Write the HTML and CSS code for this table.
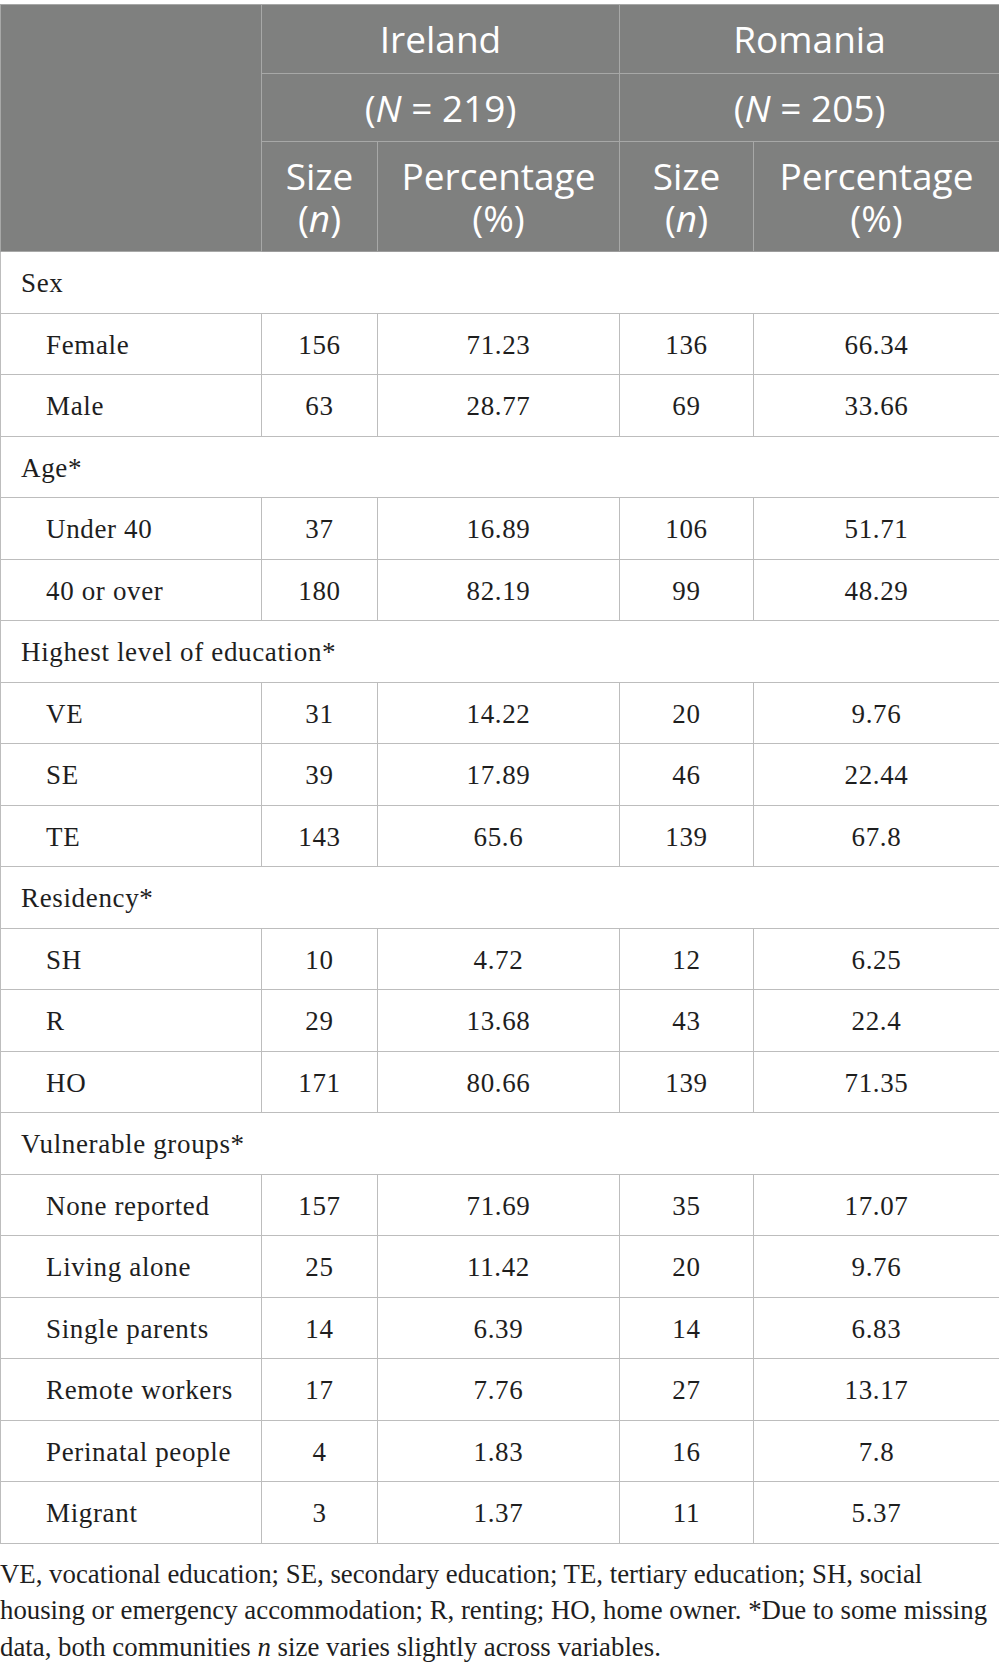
FILE: index.html
```html
<!DOCTYPE html>
<html lang="en">
<head>
  <meta charset="UTF-8" />
  <title>Sample characteristics - Ireland and Romania</title>
  <link rel="stylesheet" href="styles.css">
</head>
<body>

<table class="stats">
  <colgroup>
    <col class="c-label">
    <col class="c-size">
    <col class="c-pct">
    <col class="c-size2">
    <col class="c-pct2">
  </colgroup>
  <thead>
    <tr>
      <th rowspan="3"></th>
      <th colspan="2">Ireland</th>
      <th colspan="2">Romania</th>
    </tr>
    <tr>
      <th colspan="2">(<i>N</i> = 219)</th>
      <th colspan="2">(<i>N</i> = 205)</th>
    </tr>
    <tr>
      <th>Size<br>(<i>n</i>)</th>
      <th>Percentage<br>(%)</th>
      <th>Size<br>(<i>n</i>)</th>
      <th>Percentage<br>(%)</th>
    </tr>
  </thead>
  <tbody>
    <tr><td class="group" colspan="5">Sex</td></tr>
    <tr><td class="item">Female</td><td>156</td><td>71.23</td><td>136</td><td>66.34</td></tr>
    <tr><td class="item">Male</td><td>63</td><td>28.77</td><td>69</td><td>33.66</td></tr>

    <tr><td class="group" colspan="5">Age*</td></tr>
    <tr><td class="item">Under 40</td><td>37</td><td>16.89</td><td>106</td><td>51.71</td></tr>
    <tr><td class="item">40 or over</td><td>180</td><td>82.19</td><td>99</td><td>48.29</td></tr>

    <tr><td class="group" colspan="5">Highest level of education*</td></tr>
    <tr><td class="item">VE</td><td>31</td><td>14.22</td><td>20</td><td>9.76</td></tr>
    <tr><td class="item">SE</td><td>39</td><td>17.89</td><td>46</td><td>22.44</td></tr>
    <tr><td class="item">TE</td><td>143</td><td>65.6</td><td>139</td><td>67.8</td></tr>

    <tr><td class="group" colspan="5">Residency*</td></tr>
    <tr><td class="item">SH</td><td>10</td><td>4.72</td><td>12</td><td>6.25</td></tr>
    <tr><td class="item">R</td><td>29</td><td>13.68</td><td>43</td><td>22.4</td></tr>
    <tr><td class="item">HO</td><td>171</td><td>80.66</td><td>139</td><td>71.35</td></tr>

    <tr><td class="group" colspan="5">Vulnerable groups*</td></tr>
    <tr><td class="item">None reported</td><td>157</td><td>71.69</td><td>35</td><td>17.07</td></tr>
    <tr><td class="item">Living alone</td><td>25</td><td>11.42</td><td>20</td><td>9.76</td></tr>
    <tr><td class="item">Single parents</td><td>14</td><td>6.39</td><td>14</td><td>6.83</td></tr>
    <tr><td class="item">Remote workers</td><td>17</td><td>7.76</td><td>27</td><td>13.17</td></tr>
    <tr><td class="item">Perinatal people</td><td>4</td><td>1.83</td><td>16</td><td>7.8</td></tr>
    <tr><td class="item">Migrant</td><td>3</td><td>1.37</td><td>11</td><td>5.37</td></tr>
  </tbody>
</table>

<p class="notes">VE, vocational education; SE, secondary education; TE, tertiary education; SH, social housing or emergency accommodation; R, renting; HO, home owner. *Due to some missing data, both communities <i>n</i> size varies slightly across variables.</p>

</body>
</html>
```

FILE: styles.css
```css
/* Demographics table, journal style */
* {
  margin: 0;
  padding: 0;
  box-sizing: border-box;
}
body {
  background: #fff;
  color: #1e1e1e;
  font-family: "Liberation Serif", "Times New Roman", serif;
  padding-top: 4px;
  width: 999px;
}
.stats {
  width: 999px;
  border-collapse: collapse;
  table-layout: fixed;
}
.c-label { width: 261px; }
.c-size { width: 116px; }
.c-pct { width: 242px; }
.c-size2 { width: 134px; }
.c-pct2 { width: 246px; }

thead th {
  background: #7f807f;
  color: #fff;
  font-family: "Open Sans", "Liberation Sans", sans-serif;
  font-weight: 400;
  font-size: 37px;
  line-height: 41.5px;
  padding: 13px 4px;
  text-align: center;
  border: 1px solid #a7a8a7;
}
thead tr:last-child th {
  border-bottom-color: #9c9c9c;
}
tbody td {
  font-size: 27px;
  letter-spacing: 0.65px;
  line-height: 36.5px;
  padding: 13px 6px 11px;
  text-align: center;
  border: 1px solid #bdbdbd;
  white-space: nowrap;
}
tbody td.group {
  text-align: left;
  padding-left: 20px;
}
tbody td.item {
  text-align: left;
  padding-left: 45px;
}
.notes {
  margin-top: 12px;
  font-size: 26.8px;
  line-height: 36.7px;
  color: #1e1e1e;
}
```
